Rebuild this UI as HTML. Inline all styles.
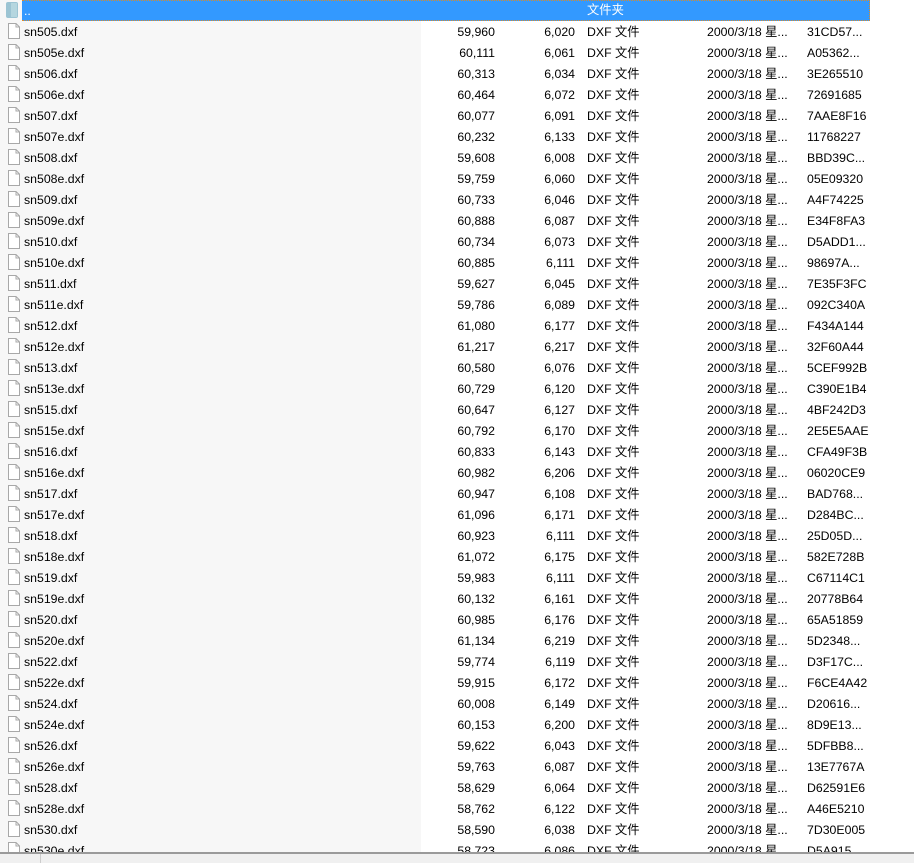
<!DOCTYPE html>
<html><head><meta charset="utf-8"><style>
html,body{margin:0;padding:0;width:914px;height:861px;overflow:hidden;background:#fff;font-family:"Liberation Sans","Noto Sans CJK SC",sans-serif;font-size:12.3px;color:#000}
#leftbg{position:absolute;left:0;top:0;width:421px;height:852px;background:#f7f7f7}
.r{position:absolute;left:0;width:914px;height:21px;line-height:21px;white-space:nowrap}
.r span{position:absolute;top:1px}
.n{left:24px}.a{right:419px;text-align:right}.b{right:339px;text-align:right}.t{left:587px}.d{left:707px}.h{left:807px}
.ic{position:absolute;left:8px;top:2px}
#hdr{position:absolute;left:22px;top:0;width:847px;height:19px;background:#3399ff;border:1px dotted #d98b2b;border-left:none}
#bot{position:absolute;left:0;top:852px;width:914px;height:9px;background:#f0f0f0;border-top:2px solid #9a9a9a}
</style></head><body>
<div id="leftbg"></div>
<div id="hdr"></div>
<div class="r" style="top:0;color:#fff">
<svg class="ic" style="left:5px;top:1px" width="14" height="18"><rect x="1" y="1" width="12" height="16" rx="2" fill="#9cc4d3"/><rect x="6" y="2" width="6" height="14" fill="#b5d6df"/></svg>
<span class="n" style="top:1px">..</span><span style="left:587px;top:0">文件夹</span></div>
<div id="rows"></div>
<div id="bot"><div style="position:absolute;left:40px;top:0;width:1px;height:9px;background:#ccc"></div></div>
<script>
var d=[["sn505.dxf","59,960","6,020","31CD57..."],["sn505e.dxf","60,111","6,061","A05362..."],["sn506.dxf","60,313","6,034","3E265510"],["sn506e.dxf","60,464","6,072","72691685"],["sn507.dxf","60,077","6,091","7AAE8F16"],["sn507e.dxf","60,232","6,133","11768227"],["sn508.dxf","59,608","6,008","BBD39C..."],["sn508e.dxf","59,759","6,060","05E09320"],["sn509.dxf","60,733","6,046","A4F74225"],["sn509e.dxf","60,888","6,087","E34F8FA3"],["sn510.dxf","60,734","6,073","D5ADD1..."],["sn510e.dxf","60,885","6,111","98697A..."],["sn511.dxf","59,627","6,045","7E35F3FC"],["sn511e.dxf","59,786","6,089","092C340A"],["sn512.dxf","61,080","6,177","F434A144"],["sn512e.dxf","61,217","6,217","32F60A44"],["sn513.dxf","60,580","6,076","5CEF992B"],["sn513e.dxf","60,729","6,120","C390E1B4"],["sn515.dxf","60,647","6,127","4BF242D3"],["sn515e.dxf","60,792","6,170","2E5E5AAE"],["sn516.dxf","60,833","6,143","CFA49F3B"],["sn516e.dxf","60,982","6,206","06020CE9"],["sn517.dxf","60,947","6,108","BAD768..."],["sn517e.dxf","61,096","6,171","D284BC..."],["sn518.dxf","60,923","6,111","25D05D..."],["sn518e.dxf","61,072","6,175","582E728B"],["sn519.dxf","59,983","6,111","C67114C1"],["sn519e.dxf","60,132","6,161","20778B64"],["sn520.dxf","60,985","6,176","65A51859"],["sn520e.dxf","61,134","6,219","5D2348..."],["sn522.dxf","59,774","6,119","D3F17C..."],["sn522e.dxf","59,915","6,172","F6CE4A42"],["sn524.dxf","60,008","6,149","D20616..."],["sn524e.dxf","60,153","6,200","8D9E13..."],["sn526.dxf","59,622","6,043","5DFBB8..."],["sn526e.dxf","59,763","6,087","13E7767A"],["sn528.dxf","58,629","6,064","D62591E6"],["sn528e.dxf","58,762","6,122","A46E5210"],["sn530.dxf","58,590","6,038","7D30E005"],["sn530e.dxf","58,723","6,086","D5A915..."]];
var h="";
for(var i=0;i<d.length;i++){var y=21+21*i;
h+='<div class="r" style="top:'+y+'px"><svg class="ic" width="12" height="16"><path d="M0.5 0.5H8L11.5 4V15.5H0.5Z" fill="#fff" stroke="#a8a8a8"/><path d="M8 0.5V4H11.5" fill="none" stroke="#a8a8a8"/></svg><span class="n">'+d[i][0]+'</span><span class="a">'+d[i][1]+'</span><span class="b">'+d[i][2]+'</span><span class="t">DXF 文件</span><span class="d">2000/3/18 星...</span><span class="h">'+d[i][3]+'</span></div>';}
document.getElementById("rows").innerHTML=h;
</script>
</body></html>
